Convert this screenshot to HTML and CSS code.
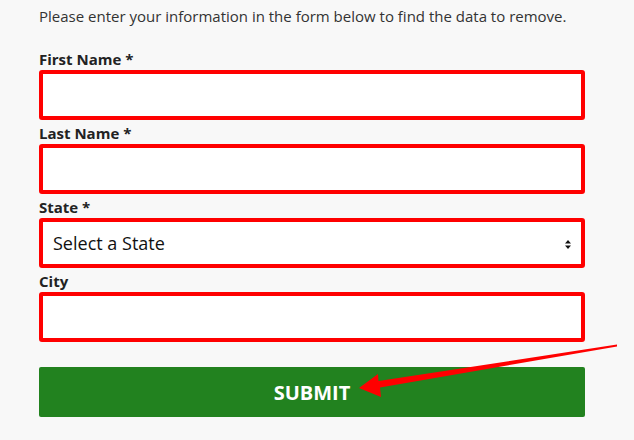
FILE: index.html
```html
<!DOCTYPE html>
<html>
<head>
    <title>Remove My Data</title>
    <link rel="stylesheet" href="styles.css">
</head>
<body>

    <div class="page">
        <p class="intro">Please enter your information in the form below to find the data to remove.</p>

        <form class="search-form">
            <div class="field">
                <label for="firstName">First Name *</label>
                <input type="text" id="firstName" name="firstName">
            </div>

            <div class="field">
                <label for="lastName">Last Name *</label>
                <input type="text" id="lastName" name="lastName">
            </div>

            <div class="field">
                <label for="state">State *</label>
                <div class="select-wrap">
                    <select id="state" name="state">
                        <option>Select a State</option>
                    </select>
                    <svg class="select-arrows" width="8" height="11" viewBox="0 0 8 11">
                        <path d="M4 1 L7 4.5 L1 4.5 Z M4 10 L7 6.5 L1 6.5 Z" fill="#111"/>
                    </svg>
                </div>
            </div>

            <div class="field">
                <label for="city">City</label>
                <input type="text" id="city" name="city">
            </div>

            <button type="submit" class="submit-button">Submit</button>
        </form>
    </div>

    <!-- red annotation arrow pointing at the button -->
    <svg class="annotation" width="634" height="440" viewBox="0 0 634 440">
        <polygon points="359,388 378,374 378.5,381 617,344.5 617,346.5 380,387.5 381,397" fill="#ff0000"/>
    </svg>

</body>
</html>
```

FILE: styles.css
```css
body {
    font-family: "Open Sans", Arial, sans-serif;
    background-color: #f8f8f8;
    margin: 0;
    padding: 0;
}

.page {
    padding: 6px 0 0 39px;
    width: 546px;
}

.intro {
    margin: 0 0 23px 0;
    font-size: 15px;
    line-height: 20px;
    color: #333;
}

.field {
    margin-bottom: 3px;
}

.field label {
    display: block;
    font-size: 15px;
    font-weight: bold;
    line-height: 20px;
    color: #222;
}

.field input,
.field select {
    display: block;
    box-sizing: border-box;
    width: 100%;
    height: 50px;
    margin: 1px 0 0 0;
    border: 4px solid #ff0000;
    border-radius: 3px;
    background-color: #fff;
    outline: none;
}

.select-wrap {
    position: relative;
}

.field select {
    -webkit-appearance: none;
    appearance: none;
    padding: 0 0 0 10px;
    font-family: "Open Sans", Arial, sans-serif;
    font-size: 18px;
    color: #111;
}

.select-arrows {
    position: absolute;
    right: 13px;
    top: 21px;
}

.submit-button {
    display: block;
    width: 100%;
    height: 50px;
    margin-top: 25px;
    border: none;
    border-radius: 2px;
    background-color: #22821f;
    color: #fff;
    font-family: "Open Sans", Arial, sans-serif;
    font-size: 20px;
    font-weight: bold;
    text-transform: uppercase;
    cursor: pointer;
}

.annotation {
    position: absolute;
    left: 0;
    top: 0;
    pointer-events: none;
}
```
